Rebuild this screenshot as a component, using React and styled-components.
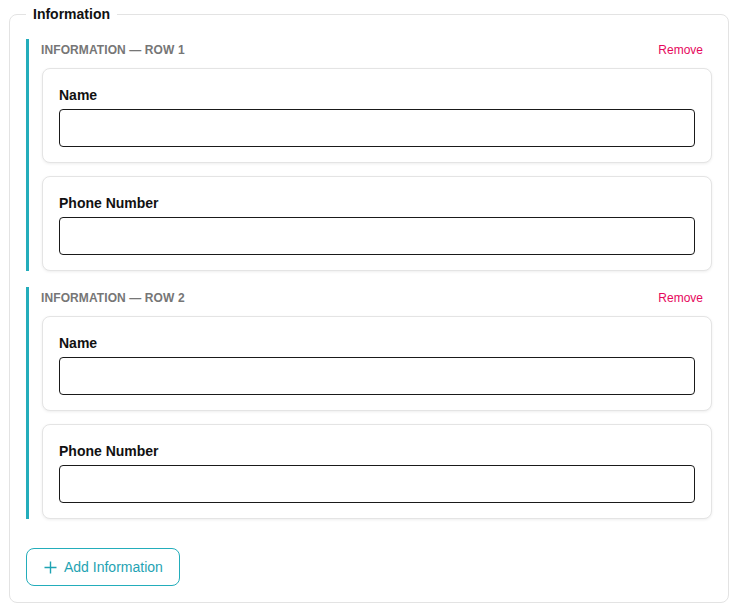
import styled, { createGlobalStyle } from 'styled-components';

const GlobalStyle = createGlobalStyle`
  body {
    margin: 0;
    background: #FFFFFF;
    font-family: "Liberation Sans", Arial, sans-serif;
    color: #111111;
  }
  * { box-sizing: border-box; }
`;

const Page = styled.div`
  padding: 5px 9px 8px 9px;
`;

const Fieldset = styled.fieldset`
  margin: 0;
  border: 1px solid #e3e3e3;
  border-radius: 8px;
  padding: 16px 16px 16px 16px;
  display: flex;
  flex-direction: column;
`;

const Legend = styled.legend`
  padding: 0 7px;
  font-size: 14px;
  font-weight: 700;
  line-height: 18px;
  color: #111111;
`;

const Groups = styled.div`
  display: flex;
  flex-direction: column;
  gap: 16px;
`;

const Group = styled.section`
  border-left: 3px solid #23adbb;
  padding-left: 13px;
  display: flex;
  flex-direction: column;
  gap: 13px;
`;

const GroupHeader = styled.div`
  display: flex;
  justify-content: space-between;
  align-items: center;
  height: 18px;
  margin-top: 2px;
  margin-bottom: -4px;
  margin-left: -1px;
  padding-right: 9px;
`;

const GroupTitle = styled.span`
  font-size: 12px;
  font-weight: 700;
  text-transform: uppercase;
  letter-spacing: 0.1px;
  color: #767676;
`;

const RemoveButton = styled.button`
  border: none;
  background: none;
  padding: 0;
  font-family: inherit;
  font-size: 12px;
  color: #e6075c;
  cursor: pointer;
`;

const Card = styled.div`
  border: 1px solid #e4e4e4;
  border-radius: 8px;
  background: #FFFFFF;
  box-shadow: 0 1px 3px rgba(0, 0, 0, 0.07);
  padding: 17px 16px 15px 16px;
  display: flex;
  flex-direction: column;
  gap: 5px;
`;

const Label = styled.label`
  font-size: 14px;
  font-weight: 700;
  line-height: 18px;
  color: #111111;
`;

const Input = styled.input`
  height: 38px;
  width: 100%;
  border: 1px solid #1a1a1a;
  border-radius: 4px;
  padding: 0 10px;
  font-family: inherit;
  font-size: 14px;
  outline: none;
`;

const AddButton = styled.button`
  margin-top: 29px;
  align-self: flex-start;
  height: 38px;
  padding: 0 16px 0 17px;
  display: flex;
  align-items: center;
  gap: 7px;
  border: 1px solid #23adbb;
  border-radius: 8px;
  background: #FFFFFF;
  color: #1fa3b3;
  font-family: inherit;
  font-size: 14px;
  cursor: pointer;
`;

const PlusIcon = () => (
  <svg width="13" height="13" viewBox="0 0 13 13" fill="none" stroke="currentColor" strokeWidth="1.4">
    <path d="M6.5 0.5v12M0.5 6.5h12" />
  </svg>
);

const rows = [1, 2];
const fields = ['Name', 'Phone Number'];

const App = () => (
  <>
    <GlobalStyle />
    <Page>
      <Fieldset>
        <Legend>Information</Legend>
        <Groups>
          {rows.map((row) => (
            <Group key={row}>
              <GroupHeader>
                <GroupTitle>Information — Row {row}</GroupTitle>
                <RemoveButton>Remove</RemoveButton>
              </GroupHeader>
              {fields.map((field) => (
                <Card key={field}>
                  <Label>{field}</Label>
                  <Input />
                </Card>
              ))}
            </Group>
          ))}
        </Groups>
        <AddButton>
          <PlusIcon />
          Add Information
        </AddButton>
      </Fieldset>
    </Page>
  </>
);

export default App;
